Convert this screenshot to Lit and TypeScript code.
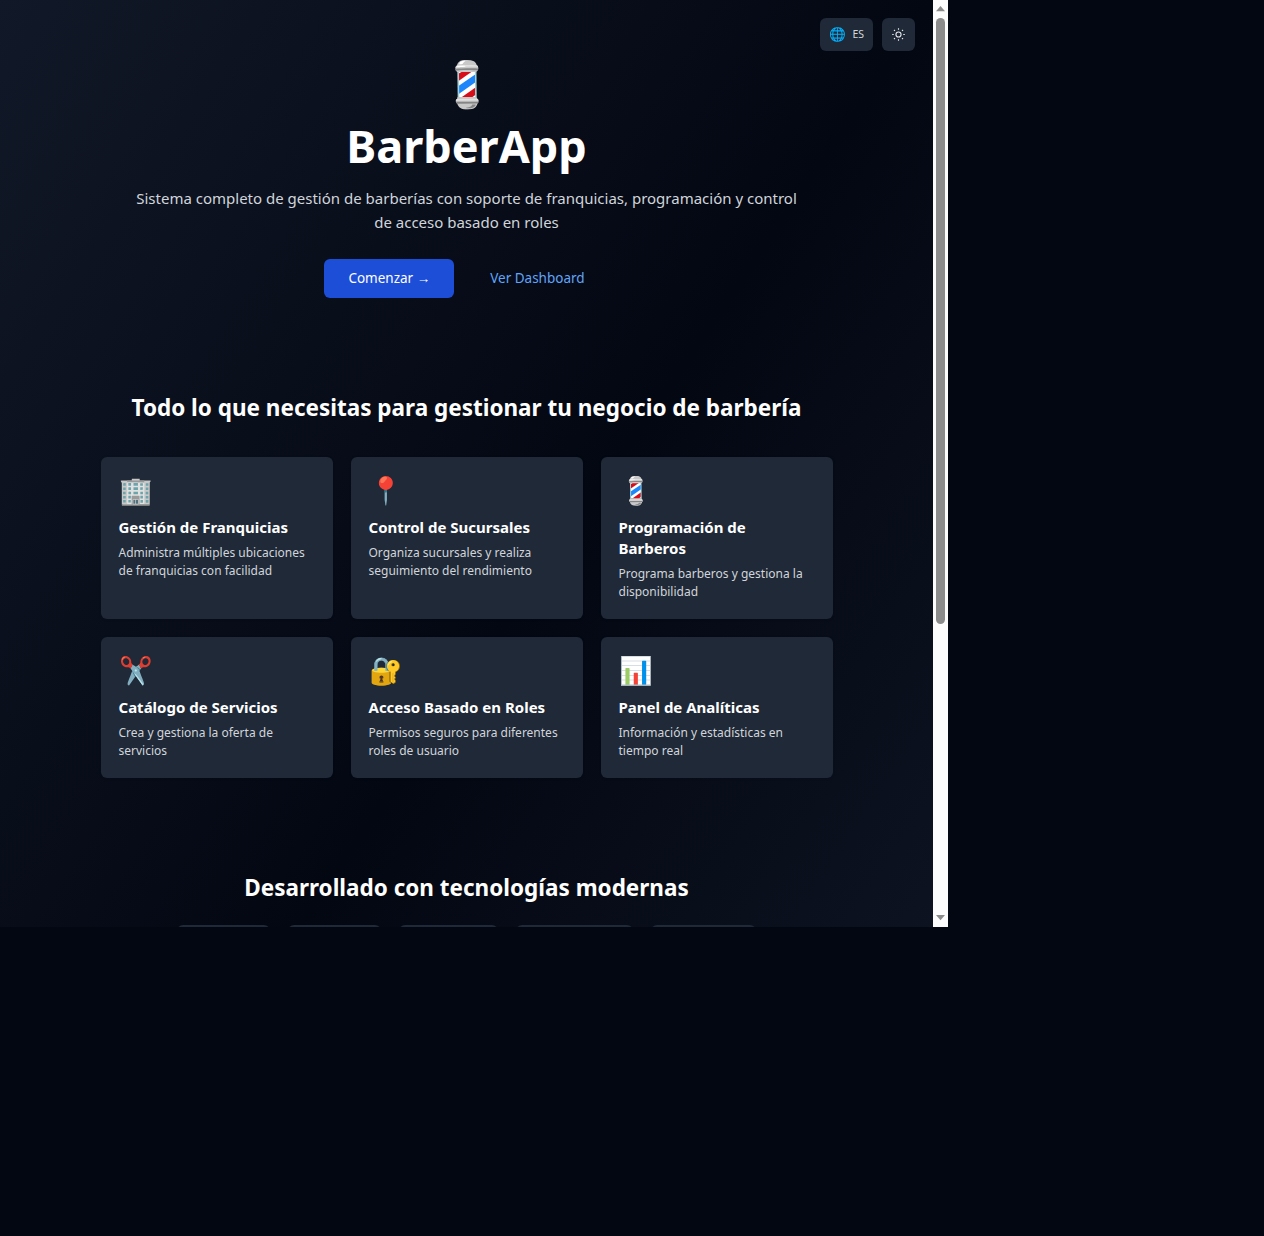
import { LitElement, html, css } from "lit";
import { customElement, state } from "lit/decorators.js";

interface Feature {
  icon: string;
  title: string;
  text: string;
}

const FEATURES: Feature[] = [
  { icon: "🏢", title: "Gestión de Franquicias", text: "Administra múltiples ubicaciones de franquicias con facilidad" },
  { icon: "📍", title: "Control de Sucursales", text: "Organiza sucursales y realiza seguimiento del rendimiento" },
  { icon: "💈", title: "Programación de Barberos", text: "Programa barberos y gestiona la disponibilidad" },
  { icon: "✂️", title: "Catálogo de Servicios", text: "Crea y gestiona la oferta de servicios" },
  { icon: "🔐", title: "Acceso Basado en Roles", text: "Permisos seguros para diferentes roles de usuario" },
  { icon: "📊", title: "Panel de Analíticas", text: "Información y estadísticas en tiempo real" },
];

const CHIP_WIDTHS = [124, 124, 132, 156, 140];

@customElement("feature-card")
export class FeatureCard extends LitElement {
  static properties = { feature: { attribute: false } };
  declare feature: Feature;

  static styles = css`
    :host {
      display: block;
      padding: 24px;
      border-radius: 8px;
      background: #1f2937;
      box-shadow: 0 1px 3px rgba(0, 0, 0, 0.1);
    }
    .icon {
      margin-bottom: 16px;
      font-size: 36px;
      line-height: 40px;
    }
    .title {
      margin: 0 0 8px;
      font-size: 20px;
      line-height: 28px;
      font-weight: 700;
      color: #fff;
    }
    .text {
      margin: 0;
      font-size: 16px;
      line-height: 24px;
      color: #d1d5db;
    }
  `;

  render() {
    return html`
      <div class="icon" aria-hidden="true">${this.feature.icon}</div>
      <h3 class="title">${this.feature.title}</h3>
      <p class="text">${this.feature.text}</p>
    `;
  }
}

@customElement("app-root")
export class AppRoot extends LitElement {
  @state() private progress = 0;

  static styles = css`
    :host {
      display: block;
      min-height: 100vh;
      background: #030712;
      font-family: "Noto Sans", sans-serif;
      color: #fff;
    }
    /* The whole interface is presented at three quarters of its scale. */
    .frame {
      zoom: 0.75;
      position: relative;
      display: flex;
      width: 100vw;
      height: 100vh;
    }
    .scroller {
      flex: 1;
      min-width: 0;
      overflow-y: auto;
      scrollbar-width: none;
      background: #030712;
    }
    .content {
      padding-bottom: 472px;
      background: linear-gradient(to bottom right, #111827, #030712, #111827);
    }
    .tools {
      position: absolute;
      top: 24px;
      right: 44px;
      display: flex;
      gap: 12px;
    }
    .tool {
      display: flex;
      align-items: center;
      gap: 8px;
      height: 44px;
      padding: 0 12px;
      border: 0;
      border-radius: 8px;
      background: #1f2937;
      color: #d1d5db;
      font-family: inherit;
      font-size: 14px;
      line-height: 20px;
      cursor: pointer;
    }
    .globe {
      font-size: 18px;
    }
    .sun {
      display: block;
      width: 20px;
      height: 20px;
      color: #e5e7eb;
    }
    .hero {
      display: flex;
      flex-direction: column;
      align-items: center;
      padding: 80px 24px 64px;
      text-align: center;
    }
    .pole {
      margin-bottom: 24px;
      font-size: 60px;
      line-height: 60px;
    }
    .brand {
      margin: 0 0 24px;
      font-size: 60px;
      line-height: 60px;
      font-weight: 700;
    }
    .lead {
      max-width: 896px;
      margin: 0 0 32px;
      font-size: 20px;
      line-height: 1.625;
      color: #d1d5db;
    }
    .actions {
      display: flex;
      gap: 16px;
    }
    .action {
      padding: 12px 32px;
      border-radius: 8px;
      font-size: 18px;
      line-height: 28px;
      text-decoration: none;
    }
    .primary {
      background: #1d4ed8;
      color: #fff;
    }
    .secondary {
      color: #60a5fa;
    }
    .section {
      max-width: 976px;
      margin: 0 auto;
      padding: 64px 24px;
    }
    .heading {
      margin: 0 0 48px;
      font-size: 30px;
      line-height: 36px;
      font-weight: 700;
      text-align: center;
    }
    .heading.close {
      margin-bottom: 32px;
    }
    .grid {
      display: grid;
      grid-template-columns: repeat(3, 1fr);
      gap: 24px;
    }
    .chips {
      display: flex;
      flex-wrap: wrap;
      justify-content: center;
      gap: 24px;
      margin: 0;
      padding: 0;
      list-style: none;
    }
    .chip {
      height: 48px;
      border-radius: 8px;
      background: #1f2937;
    }
    .bar {
      display: flex;
      flex-direction: column;
      align-items: center;
      flex: none;
      width: 20px;
      background: #fcfcfc;
    }
    .arrow {
      display: block;
      width: 20px;
      height: 24px;
    }
    .track {
      flex: 1;
      width: 12px;
    }
    .thumb {
      position: relative;
      height: 68%;
      border-radius: 6px;
      background: #8b8b8b;
    }
  `;

  private onScroll(e: Event) {
    const el = e.currentTarget as HTMLElement;
    const room = el.scrollHeight - el.clientHeight;
    this.progress = room > 0 ? el.scrollTop / room : 0;
  }

  render() {
    return html`
      <div class="frame">
        <div class="scroller" @scroll=${this.onScroll}>
          <main class="content">
            <header class="hero">
              <div class="pole" aria-hidden="true">💈</div>
              <h1 class="brand">BarberApp</h1>
              <p class="lead">
                Sistema completo de gestión de barberías con soporte de franquicias, programación y control de acceso
                basado en roles
              </p>
              <nav class="actions">
                <a class="action primary" href="#comenzar">Comenzar →</a>
                <a class="action secondary" href="#dashboard">Ver Dashboard</a>
              </nav>
            </header>
            <section class="section">
              <h2 class="heading">Todo lo que necesitas para gestionar tu negocio de barbería</h2>
              <div class="grid">${FEATURES.map((f) => html`<feature-card .feature=${f}></feature-card>`)}</div>
            </section>
            <section class="section">
              <h2 class="heading close">Desarrollado con tecnologías modernas</h2>
              <ul class="chips">
                ${CHIP_WIDTHS.map((w) => html`<li class="chip" style="width:${w}px"></li>`)}
              </ul>
            </section>
          </main>
        </div>
        <div class="tools">
          <button class="tool" type="button"><span class="globe" aria-hidden="true">🌐</span><span>ES</span></button>
          <button class="tool" type="button" aria-label="Tema">
            <svg class="sun" viewBox="0 0 20 20" fill="none" stroke="currentColor" stroke-width="1.5" aria-hidden="true">
              <circle cx="10" cy="10" r="3.4" />
              <path
                d="M10 1.6v2M10 16.4v2M1.6 10h2M16.4 10h2M4 4l1.3 1.3M14.7 14.7l1.3 1.3M4 16l1.3-1.3M14.7 5.3l1.3-1.3"
              />
            </svg>
          </button>
        </div>
        <div class="bar" aria-hidden="true">
          <svg class="arrow" viewBox="0 0 20 24"><path d="M10 8l6 7H4z" fill="#8b8b8b" /></svg>
          <div class="track"><div class="thumb" style="top:${this.progress * 32}%"></div></div>
          <svg class="arrow" viewBox="0 0 20 24"><path d="M10 15l6-7H4z" fill="#8b8b8b" /></svg>
        </div>
      </div>
    `;
  }
}
